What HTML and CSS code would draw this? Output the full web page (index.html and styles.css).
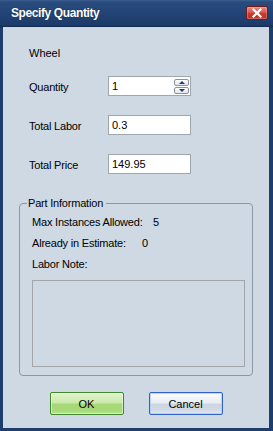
FILE: index.html
```html
<!DOCTYPE html>
<html lang="en">
<head>
  <meta charset="UTF-8" />
  <meta name="viewport" content="width=device-width, initial-scale=1.0" />
  <title>Specify Quantity</title>
  <link rel="stylesheet" href="styles.css">
</head>
<body>
  <div class="window">
    <div class="titlebar">
      <span class="title">Specify Quantity</span>
      <button class="close" type="button" aria-label="Close">
        <svg width="22" height="14" viewBox="0 0 22 14">
          <path d="M7.5 3.5 L14.5 10.5 M14.5 3.5 L7.5 10.5" stroke="#fff" stroke-width="2.2" stroke-linecap="square" fill="none" />
        </svg>
      </button>
    </div>

    <div class="content">
      <div class="part-name">Wheel</div>

      <div class="form">
        <label>Quantity</label>
        <div class="spin">
          <span class="spin-value">1</span>
          <div class="spin-btns">
            <span class="spin-btn up"></span>
            <span class="spin-btn down"></span>
          </div>
        </div>

        <label>Total Labor</label>
        <input class="field" type="text" value="0.3">

        <label>Total Price</label>
        <input class="field" type="text" value="149.95">
      </div>

      <fieldset class="part-info">
        <legend>Part Information</legend>
        <div class="info-row"><span class="info-label max">Max Instances Allowed:</span><span>5</span></div>
        <div class="info-row"><span class="info-label est">Already in Estimate:</span><span>0</span></div>
        <div class="info-row">Labor Note:</div>
        <div class="note-box"></div>
      </fieldset>

      <div class="buttons">
        <button class="btn ok" type="button">OK</button>
        <button class="btn cancel" type="button">Cancel</button>
      </div>
    </div>
  </div>
</body>
</html>
```

FILE: styles.css
```css
* {
  box-sizing: border-box;
}

body {
  margin: 0;
  font-family: 'Liberation Sans', Arial, sans-serif;
  font-size: 11px;
  color: #000;
  background: #1c3c69;
}

.window {
  width: 273px;
  height: 431px;
  display: flex;
  flex-direction: column;
  background: #1d3d6b;
}

.titlebar {
  height: 27px;
  display: flex;
  align-items: center;
  padding-left: 11px;
  background: linear-gradient(#3b5f90 0, #2a4c7d 2px, #234476 50%, #1b3a67 100%);
  border-bottom: 1px solid #132c52;
}

.title {
  color: #fff;
  font-weight: bold;
  font-size: 12px;
  letter-spacing: -0.4px;
  text-shadow: 0 0 1px #0d2447;
}

.close {
  margin-left: auto;
  margin-right: 5px;
  width: 22px;
  height: 14px;
  padding: 0;
  border: 1px solid #6e1a1a;
  border-radius: 2px;
  background: linear-gradient(#ec8a80 0, #d9554b 45%, #c63a30 55%, #b8342c 100%);
  box-shadow: inset 0 0 0 1px rgba(255, 190, 180, 0.35);
  display: flex;
  align-items: center;
  justify-content: center;
}

.close svg {
  display: block;
  margin: -1px;
}

.content {
  flex: 1;
  margin: 0 4px 3px 3px;
  background: #ced9e4;
  padding-top: 16px;
}

.part-name {
  padding-left: 26px;
  line-height: 20px;
  margin-bottom: 13px;
}

.form {
  display: grid;
  grid-template-columns: 79px 83px;
  grid-auto-rows: 20px;
  row-gap: 19px;
  padding-left: 26px;
  align-items: center;
}

.form label {
  padding-top: 2px;
  letter-spacing: -0.2px;
}

.field,
.spin {
  height: 20px;
  width: 83px;
  border: 1px solid #9ea6ae;
  background: #fff;
  font-family: inherit;
  font-size: 11px;
  color: #000;
  margin: 0;
  padding: 0 3px;
  outline: none;
}

.spin {
  display: flex;
  align-items: center;
  padding: 0 1px 0 3px;
}

.spin-value {
  flex: 1;
}

.spin-btns {
  display: flex;
  flex-direction: column;
}

.spin-btn {
  width: 15px;
  height: 7px;
  border: 1px solid #8a949e;
  border-radius: 2px;
  background: linear-gradient(#ffffff, #dfe5ec);
  display: flex;
  align-items: center;
  justify-content: center;
}

.spin-btn + .spin-btn {
  margin-top: 1px;
}

.spin-btn::after {
  content: '';
  width: 0;
  height: 0;
  border-left: 3px solid transparent;
  border-right: 3px solid transparent;
}

.spin-btn.up::after {
  border-bottom: 3px solid #1c3c69;
}

.spin-btn.down::after {
  border-top: 3px solid #1c3c69;
}

.part-info {
  margin: 22px 16px 0 16px;
  padding: 2px 0 8px 12px;
  border: 1px solid #8b97a3;
  border-radius: 4px;
  min-width: 0;
}

.part-info legend {
  margin-left: -5px;
  padding: 0 3px 0 1px;
  line-height: 14px;
  letter-spacing: -0.2px;
}

.info-row {
  line-height: 21px;
  white-space: nowrap;
  letter-spacing: -0.2px;
}

.info-label {
  display: inline-block;
}

.info-label.max {
  width: 121px;
}

.info-label.est {
  width: 110px;
}

.note-box {
  margin-top: 5px;
  width: 213px;
  height: 87px;
  border: 1px solid #a2a6aa;
}

.buttons {
  display: flex;
  justify-content: center;
  gap: 25px;
  margin-top: 16px;
}

.btn {
  width: 74px;
  height: 23px;
  padding: 0;
  font-family: inherit;
  font-size: 11px;
  color: #000;
  border-radius: 2px;
}

.ok {
  border: 1px solid #3f8a2b;
  background: linear-gradient(#e2f4d0 0, #c9e9a9 48%, #a7d878 52%, #a9da7a 85%, #bfe497 100%);
  box-shadow: inset 0 0 0 1px rgba(240, 255, 225, 0.6);
}

.cancel {
  border: 1px solid #2f63c6;
  background: linear-gradient(#fbfcfe 0, #e9eef3 45%, #cdd6e0 55%, #d3dce6 85%, #e4eaf1 100%);
  box-shadow: inset 0 0 0 1px rgba(170, 205, 250, 0.8);
}
```
